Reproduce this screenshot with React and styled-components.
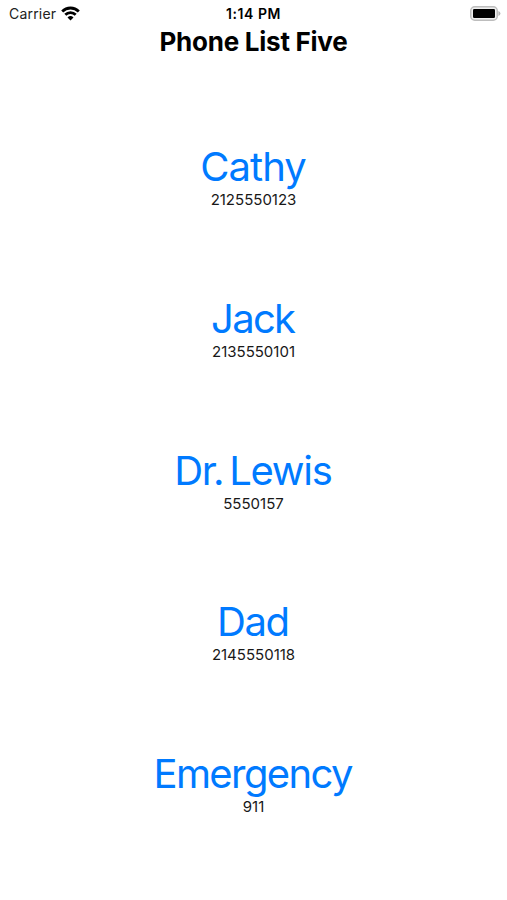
import styled, { createGlobalStyle } from 'styled-components';

const GlobalStyle = createGlobalStyle`
  body {
    margin: 0;
    background-color: #ffffff;
    color: #000000;
    font-family: Inter, Roboto, sans-serif;
  }
`;

const StyledScreen = styled.main`
  display: flex;
  flex-direction: column;
  height: 900px;
  overflow: hidden;
`;

const StyledStatusBar = styled.header`
  display: grid;
  grid-template-columns: 1fr auto 1fr;
  align-items: center;
  height: 27px;
  padding: 0 6px 0 9px;
  box-sizing: border-box;
  font-size: 14px;
`;

const StyledCarrier = styled.div`
  display: flex;
  align-items: center;
  gap: 5px;
  color: #222222;
  letter-spacing: 0.2px;
`;

const StyledTime = styled.time`
  margin-right: 3px;
  font-weight: 600;
  letter-spacing: 0.55px;
`;

const StyledBattery = styled.svg`
  justify-self: end;
  margin-top: -1px;
`;

const StyledTitle = styled.h1`
  margin: 0;
  height: 30px;
  font-size: 26px;
  font-weight: 700;
  line-height: 30px;
  letter-spacing: -0.25px;
  text-align: center;
`;

const StyledContactsList = styled.ul`
  display: grid;
  grid-auto-rows: 151.7px;
  margin: 0;
  padding: 46.4px 0 0;
  list-style: none;
`;

const StyledContact = styled.li`
  display: flex;
  flex-direction: column;
  align-items: center;
  padding-top: 40px;
`;

const StyledName = styled.a`
  color: #007aff;
  font-size: 40px;
  line-height: 48px;
  letter-spacing: ${({ $spacing }) => $spacing}px;
  margin-right: ${({ $spacing }) => -$spacing}px;
  word-spacing: -4px;
  text-decoration: none;
`;

const StyledNumber = styled.span`
  color: #181818;
  font-size: 15px;
  line-height: 17px;
`;

const contacts = [
  { name: 'Cathy', number: '2125550123', spacing: -0.9 },
  { name: 'Jack', number: '2135550101', spacing: -1.7 },
  { name: 'Dr. Lewis', number: '5550157', spacing: -1.3 },
  { name: 'Dad', number: '2145550118', spacing: -1.4 },
  { name: 'Emergency', number: '911', spacing: -1.6 },
];

function App() {
  return (
    <StyledScreen>
      <GlobalStyle />
      <StyledStatusBar>
        <StyledCarrier>
          Carrier
          <svg width="19" height="15" viewBox="0 0 19 15" fill="none" stroke="#000" strokeWidth="2.8">
            <path d="M1.2 5.4a11.8 11.8 0 0 1 16.6 0" />
            <path d="M4.3 8.8a7.4 7.4 0 0 1 10.4 0" />
            <path d="M9.5 14.5 6.5 11.5a4.3 4.3 0 0 1 6 0z" fill="#000" stroke="none" />
          </svg>
        </StyledCarrier>
        <StyledTime>1:14 PM</StyledTime>
        <StyledBattery width="31" height="15" viewBox="0 0 31 15">
          <rect x="0.75" y="0.75" width="26.5" height="13.5" rx="4" fill="#efefef" stroke="#bdbdbd" strokeWidth="1.5" />
          <rect x="3" y="3" width="22" height="9" rx="1.2" />
          <path d="M28.4 5v5q2-.8 2-2.5t-2-2.5" fill="#b4b4b4" />
        </StyledBattery>
      </StyledStatusBar>
      <StyledTitle>Phone List Five</StyledTitle>
      <StyledContactsList>
        {contacts.map(({ name, number, spacing }) => (
          <StyledContact key={name}>
            <StyledName href={`tel:${number}`} $spacing={spacing}>
              {name}
            </StyledName>
            <StyledNumber>{number}</StyledNumber>
          </StyledContact>
        ))}
      </StyledContactsList>
    </StyledScreen>
  );
}

export default App;
